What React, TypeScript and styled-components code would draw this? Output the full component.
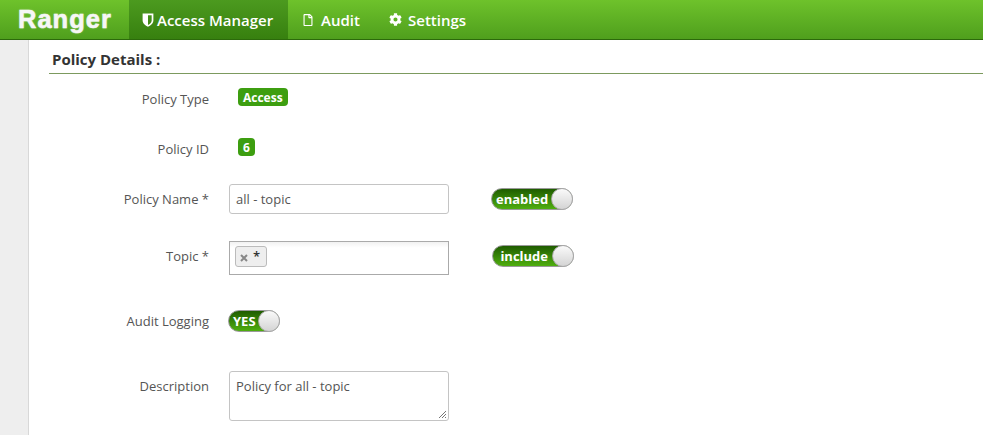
import React from 'react';
import styled, { createGlobalStyle } from 'styled-components';
import { FaCog, FaRegFile } from 'react-icons/fa';

const GlobalStyle = createGlobalStyle`
  html, body {
    margin: 0;
    padding: 0;
    height: 100%;
    overflow: hidden;
    background: #fff;
    font-family: "Open Sans", sans-serif;
    font-size: 13px;
    color: #555;
  }
`;

const Page = styled.div`
  display: flex;
  flex-direction: column;
  height: 435px;
`;

const Navbar = styled.nav`
  display: flex;
  align-items: stretch;
  height: 39px;
  flex: none;
  background: linear-gradient(to bottom, #6ec22b, #4f9f1d);
  border-bottom: 1px solid #2c6a0b;
`;

const Brand = styled.div`
  width: 111px;
  padding-left: 18px;
  font-family: "Liberation Sans", sans-serif;
  font-weight: 700;
  font-size: 25.5px;
  letter-spacing: 1px;
  line-height: 39px;
  color: #f6f6f6;
  -webkit-text-stroke: 0.5px #f6f6f6;
  text-shadow: 0 0 2px rgba(255, 255, 255, 0.5);
`;

const NavItem = styled.a<{ $active?: boolean; $width: number; $gap: number; $pad: number }>`
  display: flex;
  align-items: center;
  gap: ${p => p.$gap}px;
  box-sizing: border-box;
  width: ${p => p.$width}px;
  padding-left: ${p => p.$pad}px;
  color: #fff;
  font-size: 15px;
  font-weight: 600;
  background: ${p => (p.$active ? 'linear-gradient(to bottom, #4c9a1f, #37800f)' : 'none')};
`;

const Body = styled.div`
  display: flex;
  flex: 1;
  min-height: 0;
`;

const Sidebar = styled.aside`
  width: 28px;
  flex: none;
  background: #eeeeee;
  border-right: 1px solid #d8d8d8;
`;

const Content = styled.main`
  flex: 1;
  padding-left: 20px;
`;

const SectionTitle = styled.h4`
  margin: 0;
  height: 34px;
  padding: 9px 0 0 3px;
  box-sizing: border-box;
  font-size: 15px;
  line-height: 20px;
  font-weight: 700;
  color: #333;
  border-bottom: 1px solid #7c9a5e;
`;

const Form = styled.div`
  display: flex;
  flex-direction: column;
  padding-top: 10px;
`;

const Row = styled.div<{ $height: number; $top: number }>`
  display: flex;
  align-items: center;
  height: ${p => p.$height}px;
  margin-top: ${p => p.$top}px;
`;

const Label = styled.label<{ $alignTop?: boolean }>`
  width: 160px;
  flex: none;
  align-self: ${p => (p.$alignTop ? 'flex-start' : 'center')};
  margin-top: ${p => (p.$alignTop ? '5px' : '0')};
  text-align: right;
  font-size: 13px;
  line-height: 20px;
  color: #555;
`;

const Control = styled.div`
  width: 220px;
  margin-left: 20px;
  flex: none;
  display: flex;
  align-items: center;
`;

const Badge = styled.span`
  display: inline-block;
  margin: 0 0 4px 9px;
  padding: 0 5px;
  height: 18px;
  box-sizing: border-box;
  line-height: 19px;
  font-size: 12px;
  font-weight: 700;
  color: #fff;
  background: #3d9e10;
  border-radius: 4px;
`;

const TextBox = styled.div`
  box-sizing: border-box;
  width: 220px;
  height: 30px;
  padding: 0 6px;
  line-height: 28px;
  font-size: 13px;
  color: #555;
  background: #fff;
  border: 1px solid #c4c4c4;
  border-radius: 3px;
`;

const TagBox = styled.div`
  box-sizing: border-box;
  width: 220px;
  height: 34px;
  padding: 4px 5px;
  background: linear-gradient(to bottom, #f1f1f1, #fff 18%);
  border: 1px solid #aaa;
`;

const Tag = styled.span`
  display: inline-flex;
  align-items: center;
  gap: 5px;
  box-sizing: border-box;
  height: 21px;
  padding: 0 6px 0 4px;
  font-size: 13px;
  font-weight: 600;
  color: #333;
  background: #eee;
  border: 1px solid #bbb;
  border-radius: 3px;
`;

const TagRemove = styled.svg`
  width: 8px;
  height: 8px;
  margin-top: 2px;
`;

const TagText = styled.span`
  margin-top: -2px;
`;

const TextArea = styled.div`
  position: relative;
  box-sizing: border-box;
  width: 220px;
  height: 50px;
  padding: 4px 6px;
  line-height: 20px;
  font-size: 13px;
  color: #555;
  border: 1px solid #c4c4c4;
  border-radius: 3px;
`;

const ResizeGrip = styled.svg`
  position: absolute;
  right: 1px;
  bottom: 1px;
  width: 9px;
  height: 9px;
`;

const Toggle = styled.div<{ $width: number; $left: number; $top?: number }>`
  display: flex;
  align-items: center;
  justify-content: space-between;
  box-sizing: border-box;
  width: ${p => p.$width}px;
  height: 22px;
  margin-left: ${p => p.$left}px;
  padding-left: 4px;
  border-radius: 11px;
  border: 1px solid #9a9a9a;
  background: linear-gradient(to bottom, #1f5c00, #4fae0f);
  color: #fff;
  font-size: 13px;
  font-weight: 700;
  line-height: 20px;
  ${p => (p.$top !== undefined ? `align-self: flex-start; margin-top: ${p.$top}px;` : '')}
`;

const Knob = styled.span`
  width: 22px;
  height: 22px;
  margin-right: -1px;
  border-radius: 50%;
  background: linear-gradient(to bottom, #fafafa, #d4d4d4);
  border: 1px solid #aaa;
  box-sizing: border-box;
`;

const ShieldIcon = () => (
  <svg width="12" height="14" viewBox="0 0 11 13">
    <path
      fill="#fff"
      fillRule="evenodd"
      d="M.5.5h10v6.5c0 2.8-2.6 4.7-5 5.7-2.4-1-5-2.9-5-5.7V.5zM5.5 2v9.2c1.6-.8 3.4-2.2 3.4-4.2V2H5.5z"
    />
  </svg>
);

const App = () => {
  return (
    <Page>
      <GlobalStyle />
      <Navbar>
        <Brand>Ranger</Brand>
        <NavItem $active $width={159} $gap={3} $pad={13}>
          <ShieldIcon />
          Access Manager
        </NavItem>
        <NavItem $width={87} $gap={7} $pad={14}>
          <FaRegFile size={12} />
          Audit
        </NavItem>
        <NavItem $width={100} $gap={6} $pad={14}>
          <FaCog size={13} />
          Settings
        </NavItem>
      </Navbar>
      <Body>
        <Sidebar />
        <Content>
          <SectionTitle>Policy Details :</SectionTitle>
          <Form>
            <Row $height={30} $top={0}>
              <Label>Policy Type</Label>
              <Control>
                <Badge>Access</Badge>
              </Control>
            </Row>
            <Row $height={30} $top={20}>
              <Label>Policy ID</Label>
              <Control>
                <Badge>6</Badge>
              </Control>
            </Row>
            <Row $height={30} $top={20}>
              <Label>Policy Name *</Label>
              <Control>
                <TextBox>all - topic</TextBox>
              </Control>
              <Toggle $width={82} $left={42}>
                enabled
                <Knob />
              </Toggle>
            </Row>
            <Row $height={34} $top={27}>
              <Label $alignTop>Topic *</Label>
              <Control>
                <TagBox>
                  <Tag>
                    <TagRemove viewBox="0 0 8 8">
                      <path d="M1 1l6 6M7 1L1 7" stroke="#888" strokeWidth="2" />
                    </TagRemove>
                    <TagText>*</TagText>
                  </Tag>
                </TagBox>
              </Control>
              <Toggle $width={82} $left={43} $top={4}>
                &nbsp;include
                <Knob />
              </Toggle>
            </Row>
            <Row $height={30} $top={31}>
              <Label>Audit Logging</Label>
              <Control>
                <Toggle $width={52} $left={-1}>
                  YES
                  <Knob />
                </Toggle>
              </Control>
            </Row>
            <Row $height={50} $top={35}>
              <Label $alignTop>Description</Label>
              <Control>
                <TextArea>
                  Policy for all - topic
                  <ResizeGrip viewBox="0 0 9 9">
                    <path d="M1 8l7-7M4 8l4-4M7 8l1-1" stroke="#777" strokeWidth="1" />
                  </ResizeGrip>
                </TextArea>
              </Control>
            </Row>
          </Form>
        </Content>
      </Body>
    </Page>
  );
};

export default App;
